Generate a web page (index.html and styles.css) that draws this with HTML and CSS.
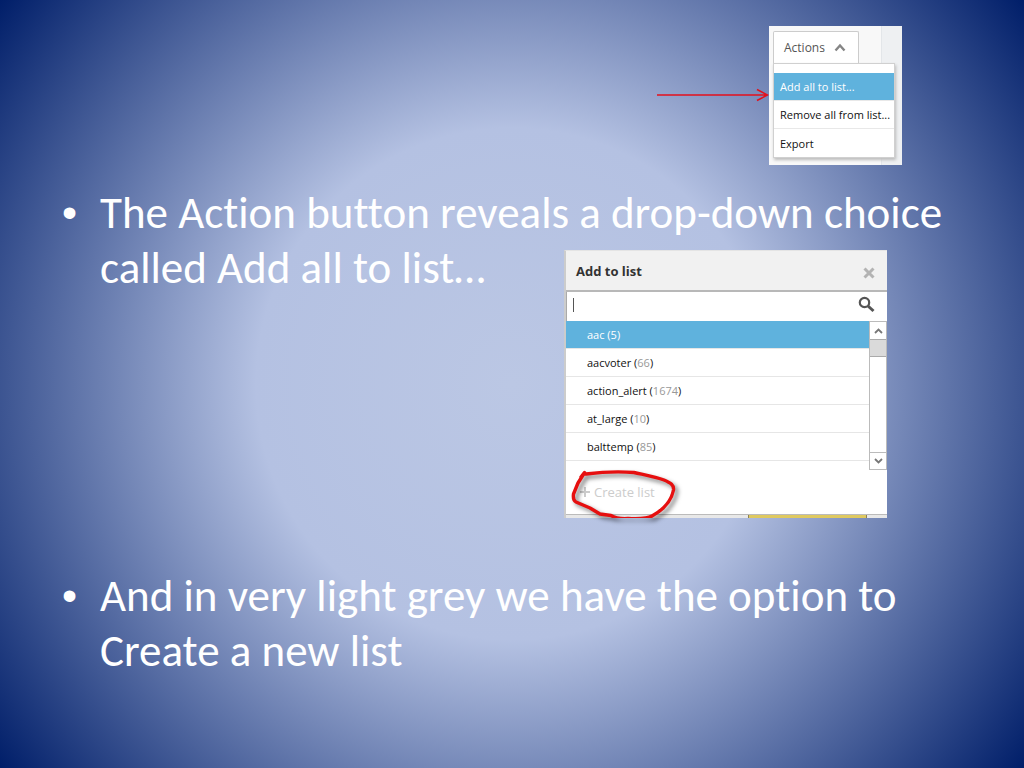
FILE: index.html
```
<!DOCTYPE html>
<html lang="en">
<head>
    <meta charset="UTF-8">
    <meta name="viewport" content="width=device-width, initial-scale=1.0">
    <title>Add all to list</title>
    <link rel="stylesheet" href="styles.css">
</head>
<body>
    <main class="slide">

        <!-- arrow and actions menu -->
        <div class="top">
            <svg class="arrow" width="112" height="16" viewBox="0 0 112 16" fill="none" stroke="#e3101c" stroke-width="1.6">
                <path d="M0 7H110M100 1.500L110.500 7L100 12.500"/>
            </svg>
            <div class="actions">
                <button class="actions-button" type="button">
                    Actions
                    <svg width="12" height="9" viewBox="0 0 12 9" fill="none" stroke="#858585" stroke-width="2.400">
                        <path d="M1.500 7.500L6 2.500L10.500 7.500"/>
                    </svg>
                </button>
                <div class="menu">
                    <button class="menu-item selected" type="button">Add all to list...</button>
                    <button class="menu-item" type="button">Remove all from list...</button>
                    <button class="menu-item" type="button">Export</button>
                </div>
            </div>
        </div>

        <ul class="points">
            <li class="point">
                <!-- add to list window -->
                <section class="dialog">
                    <header class="dialog-head">
                        <h2>Add to list</h2>
                        <button class="close" type="button" aria-label="Close">
                            <svg width="12" height="12" viewBox="0 0 12 12" stroke="#b3b3b3" stroke-width="3">
                                <path d="M1.500 1.500L10.500 10.500M10.500 1.500L1.500 10.500"/>
                            </svg>
                        </button>
                    </header>
                    <div class="search">
                        <span class="caret"></span>
                        <input type="text" aria-label="Search lists">
                        <svg width="17" height="17" viewBox="0 0 17 17" fill="none" stroke="#555">
                            <circle cx="6.500" cy="6.500" r="4.700" stroke-width="2.200"/>
                            <path d="M10 10L15.500 15" stroke-width="3"/>
                        </svg>
                    </div>
                    <div class="list-area">
                        <div class="lists">
                            <button class="list-row selected" type="button">aac (<span>5</span>)</button>
                            <button class="list-row" type="button">aacvoter (<span>66</span>)</button>
                            <button class="list-row" type="button">action_alert (<span>1674</span>)</button>
                            <button class="list-row" type="button">at_large (<span>10</span>)</button>
                            <button class="list-row" type="button">balttemp (<span>85</span>)</button>
                        </div>
                        <div class="scrollbar">
                            <button class="scroll-button" type="button" aria-label="Scroll up">
                                <svg width="9" height="6" viewBox="0 0 9 6" fill="none" stroke="#777" stroke-width="1.800"><path d="M1 5L4.500 1.500L8 5"/></svg>
                            </button>
                            <div class="thumb"></div>
                            <button class="scroll-button down" type="button" aria-label="Scroll down">
                                <svg width="9" height="6" viewBox="0 0 9 6" fill="none" stroke="#777" stroke-width="1.800"><path d="M1 1L4.500 4.500L8 1"/></svg>
                            </button>
                        </div>
                    </div>
                    <div class="dialog-foot">
                        <button class="create" type="button">
                            <svg width="10" height="10" viewBox="0 0 10 10" stroke="#ccc" stroke-width="2"><path d="M5 0V10M0 5H10"/></svg>
                            Create list
                        </button>
                    </div>
                    <div class="strip"><div class="strip-yellow"></div></div>
                    <!-- hand drawn circle -->
                    <svg class="circle" width="120" height="57" viewBox="566 461 120 57" fill="none" stroke-linecap="round" stroke-linejoin="round">
                        <path d="M584 473.500L578 483L573.500 494C573 498 574 501 576 502L590 508L600 514L611 515.500C615 518 620 519 628 518.500C639 519 649 518 652 516C661 511 671 503 673.500 490C674 485 671 483 664 480C656 477 645 475 634 472.500C621 471.500 602 472 586 474M581 477L584.500 472.500" stroke="#e60f0f" stroke-width="3.400"/>
                    </svg>
                </section>
                The Action button reveals a drop-down choice called Add all to list…
            </li>
            <li class="point">And in very light grey we have the option to Create a new list</li>
        </ul>
    </main>
</body>
</html>
```

FILE: styles.css
```
* {
    box-sizing: border-box;
}

body {
    margin: 0;
    font-family: "Open Sans", "Noto Sans", sans-serif;
    background: #00206a;
}

button, input {
    font-family: inherit;
    border: 0;
    margin: 0;
    padding: 0;
    background: none;
}

.slide {
    min-height: 100vh;
    padding: 26px 48px 24px 60px;
    background: radial-gradient(circle farthest-corner, #bbc7e4 0%, #b4c1e2 40%, #001e69 100%);
}

/* actions menu */
.top {
    display: flex;
    justify-content: flex-end;
    align-items: center;
    padding-right: 74px;
}

.actions {
    width: 133px;
    padding: 5px 7px 7px 4px;
    background: linear-gradient(90deg, #f8f8f8 112px, #d8dce0 112px, #eef0f2 113px);
}

.actions-button {
    display: flex;
    align-items: center;
    gap: 9px;
    width: 86px;
    height: 32px;
    padding-left: 10px;
    border: 1px solid #ccc;
    border-bottom: 0;
    border-radius: 2px 2px 0 0;
    background: #fff;
    color: #555;
    font-size: 12px;
}

.menu {
    padding-top: 9px;
    border: 1px solid #d0d0d0;
    background: #fff;
    box-shadow: 1px 2px 3px #bbb;
}

.menu-item {
    display: block;
    width: 100%;
    height: 28px;
    padding-left: 6px;
    border-bottom: 1px solid #e8e8e8;
    text-align: left;
    white-space: nowrap;
    font-size: 11px;
    color: #111;
}

.menu-item:last-child {
    border-bottom: 0;
}

.menu-item.selected, .list-row.selected {
    background: #5fb2dd;
    color: #fff;
}

/* bullet points */
.points {
    display: flex;
    flex-direction: column;
    gap: 50px;
    margin: 0;
    padding: 20px 0 0;
    list-style: none;
}

.point {
    display: flow-root;
    padding-left: 40px;
    font-family: Carlito, Lato, sans-serif;
    font-size: 45px;
    font-variant-ligatures: none;
    line-height: 55px;
    color: #fff;
}

.point::before {
    content: "•";
    float: left;
    margin-left: -38px;
    font-family: "Liberation Sans", sans-serif;
    font-size: 43px;
}

/* the first line of the point runs above the window */
.dialog {
    position: relative;
    float: right;
    width: 323px;
    margin: 65px 89px 0 0;
    shape-outside: inset(65px 0 0 0);
    border-top: 1px solid #e4e4e4;
    border-left: 2px solid #ccc;
    background: #fff;
    font-family: "Open Sans", "Noto Sans", sans-serif;
    font-size: 12px;
    line-height: 16px;
}

.dialog-head {
    display: flex;
    justify-content: space-between;
    align-items: center;
    height: 41px;
    padding: 0 12px 0 10px;
    border-bottom: 2px solid #b8b8b8;
    background: #f1f1f1;
}

.dialog-head h2 {
    margin: 0;
    font-size: 13px;
    color: #333;
}

.close {
    display: flex;
    padding-top: 4px;
}

.search {
    display: flex;
    align-items: center;
    height: 29px;
    padding: 0 12px 4px 6px;
    border-left: 1px solid #aaa;
}

.search input {
    flex: 1;
    min-width: 0;
    font-size: 12px;
}

.caret {
    width: 1px;
    height: 14px;
    background: #555;
}

.list-area {
    display: flex;
    height: 149px;
}

.lists {
    flex: 1;
}

.list-row {
    display: block;
    width: 100%;
    height: 28px;
    padding-left: 21px;
    border-bottom: 1px solid #e6e6e6;
    text-align: left;
    font-size: 11px;
    color: #111;
}

.list-row span {
    color: #999;
}

.list-row.selected span {
    color: #fff;
}

.scrollbar {
    display: flex;
    flex-direction: column;
    width: 18px;
    border: 1px solid #bbb;
}

.scroll-button {
    display: flex;
    align-items: center;
    justify-content: center;
    height: 17px;
}

.scroll-button.down {
    margin-top: auto;
    border-top: 1px solid #bbb;
}

.thumb {
    height: 18px;
    border: solid #aaa;
    border-width: 1px 0;
    background: #dadada;
}

.dialog-foot {
    height: 45px;
    padding: 12px 14px;
    border-bottom: 1px solid #bbb;
}

.create {
    display: flex;
    align-items: center;
    gap: 4px;
    font-size: 13px;
    line-height: 20px;
    color: #ccc;
}

.strip {
    display: flex;
    justify-content: flex-end;
    height: 3px;
    padding-right: 20px;
    background: #e8e8e8;
}

.strip-yellow {
    width: 119px;
    border: solid #8d8154;
    border-width: 0 1px;
    background: #dfc960;
}

.circle {
    position: absolute;
    left: 0;
    bottom: 0;
    filter: drop-shadow(3px 3px 2px rgba(0, 0, 0, .5));
}
```
